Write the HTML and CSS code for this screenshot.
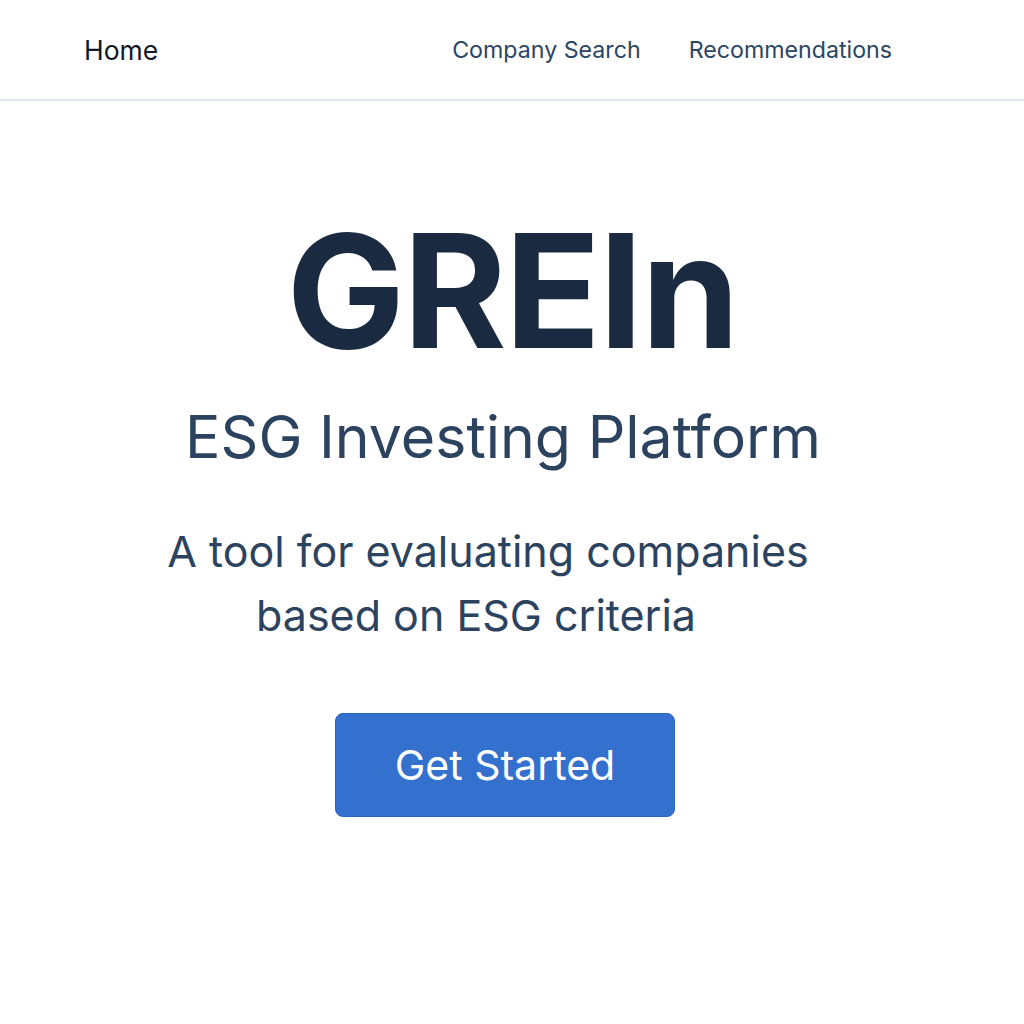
FILE: index.html
```html
<!DOCTYPE html>
<html lang="en">
<head>
<meta charset="utf-8">
<title>GREIn</title>
<link rel="stylesheet" href="styles.css">
</head>
<body>
<header class="nav">
  <a class="nav-home" href="#">Home</a>
  <nav class="nav-links">
    <a href="#">Company Search</a>
    <a href="#">Recommendations</a>
  </nav>
</header>
<main class="hero">
  <h1 class="title">GREIn</h1>
  <h2 class="subtitle">ESG Investing Platform</h2>
  <p class="tagline"><span class="line">A tool for evaluating companies</span><span class="line line-2">based on ESG criteria</span></p>
  <a class="cta" href="#">Get Started</a>
</main>
</body>
</html>
```
FILE: styles.css
```css
* { box-sizing: border-box; }
html, body { margin: 0; padding: 0; background: #fff; }
body { font-family: Inter, "Noto Sans", sans-serif; color: #1a2a40; }
a { text-decoration: none; }

.nav {
  height: 101px;
  border-bottom: 2px solid #e3e6ea;
  display: flex;
  align-items: center;
  justify-content: space-between;
  padding: 0 132px 0 84px;
}
.nav-home { font-size: 26.5px; color: #111827; }
.nav-links { display: flex; gap: 48px; }
.nav-links a { font-size: 23.2px; color: #2b4566; }

.hero {
  display: flex;
  flex-direction: column;
  align-items: center;
  padding-top: 111px;
}
.title {
  margin: 0;
  font-size: 158px;
  font-weight: 700;
  line-height: 1;
  color: #1a2a40;
  letter-spacing: -2px;
}
.subtitle {
  margin: 32px 0 0;
  font-size: 59px;
  font-weight: 400;
  line-height: 1.2;
  color: #2c4360;
  padding-right: 18px;
}
.tagline {
  margin: 46px 0 0;
  font-size: 43px;
  line-height: 64px;
  text-align: center;
  color: #2c4360;
  padding-right: 48px;
  display: flex;
  flex-direction: column;
  align-items: center;
}
.line-2 { margin-right: 24px; }
.cta {
  margin-top: 66px;
  width: 340px;
  height: 104px;
  display: flex;
  align-items: center;
  justify-content: center;
  background: #3470cd;
  border: 1px solid #2a63c4;
  border-radius: 8px;
  color: #fff;
  font-size: 41px;
  margin-right: 14px;
}
```
